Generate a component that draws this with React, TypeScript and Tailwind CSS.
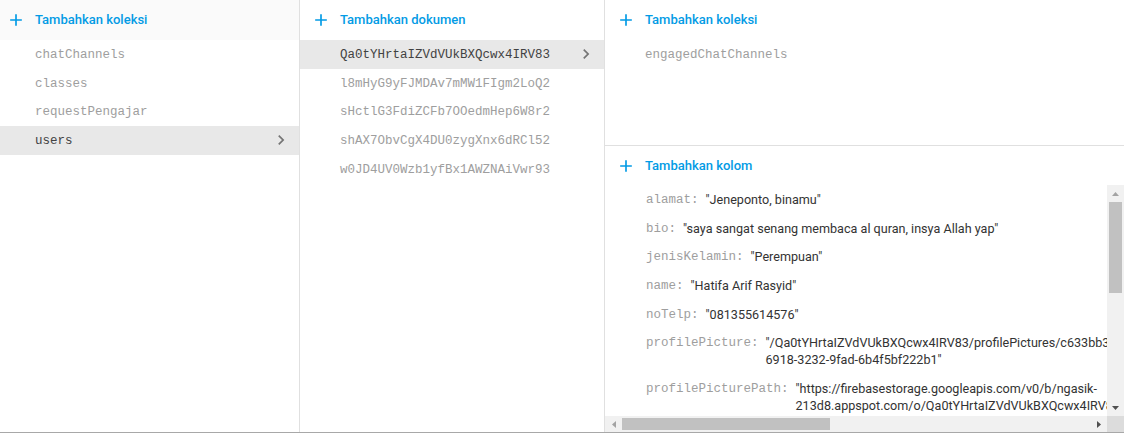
import React from 'react';

const mono = { fontFamily: '"Liberation Mono", "DejaVu Sans Mono", monospace' };

function PlusIcon() {
  return (
    <svg width="20" height="20" viewBox="0 0 24 24" className="shrink-0">
      <path d="M19 13h-6v6h-2v-6H5v-2h6V5h2v6h6v2z" fill="#039be5" />
    </svg>
  );
}

function Chevron() {
  return (
    <svg width="20" height="20" viewBox="0 0 24 24" className="shrink-0">
      <path d="M10 6L8.59 7.41 13.17 12l-4.58 4.59L10 18l6-6z" fill="#757575" />
    </svg>
  );
}

function Header({ label, pad, bg, h = 'h-[40px]' }: { label: string; pad: string; bg?: string; h?: string }) {
  return (
    <div className={`flex ${h} shrink-0 items-center ${pad} ${bg ?? ''}`}>
      <PlusIcon />
      <span className="ml-[9px] text-[13px] font-medium text-[#039be5]">{label}</span>
    </div>
  );
}

function Item({ text, selected, pl }: { text: string; selected?: boolean; pl: string }) {
  return (
    <div
      className={`flex h-[28.67px] items-center justify-between pt-[2px] ${pl} pr-[8px] ${selected ? 'bg-[#e8e8e8]' : ''}`}
    >
      <span
        className={`text-[12.5px] whitespace-nowrap ${selected ? 'text-[#424242]' : 'text-[#9e9e9e]'}`}
        style={mono}
      >
        {text}
      </span>
      {selected && (
        <span className="-mt-[2px]">
          <Chevron />
        </span>
      )}
    </div>
  );
}

const fields: { key: string; lines: string[] }[] = [
  { key: 'alamat', lines: ['"Jeneponto, binamu"'] },
  { key: 'bio', lines: ['"saya sangat senang membaca al quran, insya Allah yap"'] },
  { key: 'jenisKelamin', lines: ['"Perempuan"'] },
  { key: 'name', lines: ['"Hatifa Arif Rasyid"'] },
  { key: 'noTelp', lines: ['"081355614576"'] },
  {
    key: 'profilePicture',
    lines: ['"/Qa0tYHrtaIZVdVUkBXQcwx4IRV83/profilePictures/c633bb3e-', '6918-3232-9fad-6b4f5bf222b1"'],
  },
  {
    key: 'profilePicturePath',
    lines: [
      '"https://firebasestorage.googleapis.com/v0/b/ngasik-',
      '213d8.appspot.com/o/Qa0tYHrtaIZVdVUkBXQcwx4IRV83%2FprofilePictures"',
    ],
  },
];

function Tri({ dir, color }: { dir: 'up' | 'down' | 'left' | 'right'; color: string }) {
  const pts = {
    up: '0,4 3.5,0 7,4',
    down: '0,0 7,0 3.5,4',
    left: '4,0 4,7 0,3.5',
    right: '0,0 0,7 4,3.5',
  }[dir];
  const vertical = dir === 'up' || dir === 'down';
  return (
    <svg width={vertical ? 7 : 4} height={vertical ? 4 : 7} viewBox={vertical ? '0 0 7 4' : '0 0 4 7'}>
      <polygon points={pts} fill={color} />
    </svg>
  );
}

export default function App() {
  return (
    <div
      className="flex h-[433px] w-[1124px] overflow-hidden border-b border-[#a8a8a8] bg-white"
      style={{ fontFamily: 'Roboto, sans-serif' }}
    >
      {/* koleksi */}
      <div className="flex w-[300px] shrink-0 flex-col border-r border-[#e0e0e0]">
        <Header label="Tambahkan koleksi" pad="pl-[6px]" bg="bg-[#fafafa]" />
        <Item text="chatChannels" pl="pl-[35px]" />
        <Item text="classes" pl="pl-[35px]" />
        <Item text="requestPengajar" pl="pl-[35px]" />
        <Item text="users" pl="pl-[35px]" selected />
      </div>

      {/* dokumen */}
      <div className="flex w-[305px] shrink-0 flex-col border-r border-[#e0e0e0]">
        <Header label="Tambahkan dokumen" pad="pl-[11px]" />
        <Item text="Qa0tYHrtaIZVdVUkBXQcwx4IRV83" pl="pl-[40px]" selected />
        <Item text="l8mHyG9yFJMDAv7mMW1FIgm2LoQ2" pl="pl-[40px]" />
        <Item text="sHctlG3FdiZCFb7OOedmHep6W8r2" pl="pl-[40px]" />
        <Item text="shAX7ObvCgX4DU0zygXnx6dRCl52" pl="pl-[40px]" />
        <Item text="w0JD4UV0Wzb1yfBx1AWZNAiVwr93" pl="pl-[40px]" />
      </div>

      {/* detail dokumen */}
      <div className="flex min-w-0 flex-1 flex-col">
        <div className="h-[146px] shrink-0 border-b border-[#e0e0e0]">
          <Header label="Tambahkan koleksi" pad="pl-[11px]" />
          <Item text="engagedChatChannels" pl="pl-[40px]" />
        </div>
        <Header label="Tambahkan kolom" pad="pl-[11px]" h="h-[39px]" />

        <div className="flex min-h-0 flex-1 flex-col">
          <div className="flex min-h-0 flex-1">
            <div className="min-w-0 flex-1 overflow-hidden pl-[41px]">
              {fields.map((f) => (
                <div key={f.key} className="flex items-start py-[5.85px] leading-[17px]">
                  <span
                    className="shrink-0 pt-[2px] text-[12.5px] leading-[15px] whitespace-nowrap text-[#9e9e9e]"
                    style={mono}
                  >
                    {f.key}:
                  </span>
                  <div className="ml-[7px] text-[12.6px] text-[#333333]">
                    {f.lines.map((l) => (
                      <div key={l} className="whitespace-nowrap">
                        {l}
                      </div>
                    ))}
                  </div>
                </div>
              ))}
            </div>
            {/* scrollbar vertikal */}
            <div className="flex w-[17px] shrink-0 flex-col bg-[#f1f1f1]">
              <div className="flex h-[17px] items-center justify-center">
                <Tri dir="up" color="#a3a3a3" />
              </div>
              <div className="mx-[2px] h-[91px] bg-[#c1c1c1]" />
              <div className="flex-1" />
              <div className="flex h-[17px] items-center justify-center">
                <Tri dir="down" color="#505050" />
              </div>
            </div>
          </div>
          {/* scrollbar horizontal */}
          <div className="flex h-[16px] shrink-0 bg-[#f1f1f1]">
            <div className="flex w-[17px] items-center justify-center">
              <Tri dir="left" color="#a3a3a3" />
            </div>
            <div className="my-[2px] w-[208px] bg-[#c1c1c1]" />
            <div className="flex-1" />
            <div className="flex w-[17px] items-center justify-center">
              <Tri dir="right" color="#505050" />
            </div>
            <div className="w-[17px] bg-[#dcdcdc]" />
          </div>
        </div>
      </div>
    </div>
  );
}
